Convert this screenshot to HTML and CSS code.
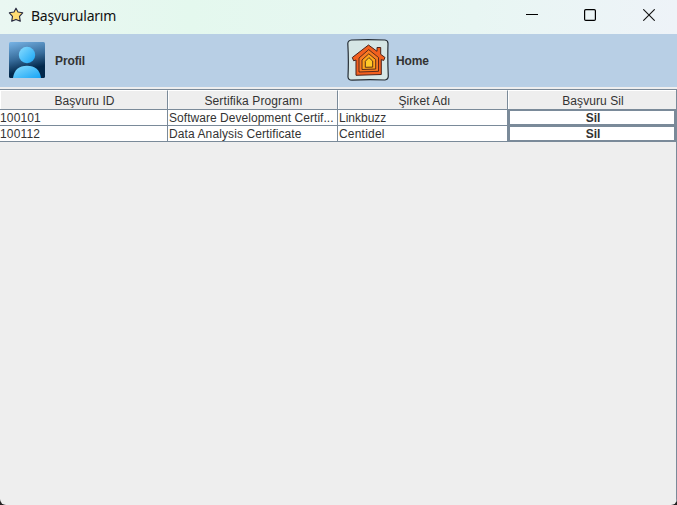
FILE: index.html
```html
<!DOCTYPE html>
<html lang="tr">
<head>
<meta charset="utf-8">
<title>Başvurularım</title>
<link rel="stylesheet" href="styles.css">
</head>
<body>
<div class="window">
  <header class="titlebar">
    <svg class="star" width="16" height="16" viewBox="0 0 16 16"><path d="M8 1.2 10 5l4.7.8-3.2 3.6.8 4.9L8 12.4l-4.3 1.9.8-4.9L1.3 5.8 6 5Z" fill="#ffdc73" stroke="#272a40" stroke-width="1.1" stroke-linejoin="round"/></svg>
    <h1 class="title">Başvurularım</h1>
    <div class="controls">
      <svg width="12" height="12" viewBox="0 0 12 12"><path d="M0 5.500h12" stroke="#000"/></svg>
      <svg width="12" height="12" viewBox="0 0 12 12"><rect x=".6" y=".6" width="10.8" height="10.8" rx="1.2" fill="none" stroke="#000" stroke-width="1.2"/></svg>
      <svg width="12" height="12" viewBox="0 0 12 12"><path d="M.3.3l11.4 11.4M11.7.3.3 11.7" stroke="#111" stroke-width="1.1"/></svg>
    </div>
  </header>
  <nav class="menubar">
    <div class="menu profile">
      <svg width="36" height="36" viewBox="0 0 36 36">
        <defs>
          <linearGradient id="bg" x1="0" y1="0" x2=".25" y2="1"><stop offset="0" stop-color="#78b4e6"/><stop offset=".5" stop-color="#376c9b"/><stop offset=".85" stop-color="#02284b"/></linearGradient>
          <linearGradient id="person" x1="0" y1="0" x2="1" y2="1"><stop offset="0" stop-color="#8addff"/><stop offset="1" stop-color="#16a4f5"/></linearGradient>
          <clipPath id="frame"><rect width="36" height="36" rx="1.500"/></clipPath>
        </defs>
        <g clip-path="url(#frame)"><rect width="36" height="36" fill="url(#bg)"/><circle cx="18" cy="13" r="8.2" fill="url(#person)"/><path d="M4 36c1-8 6-12.200 14-12.200S31 28 32 36Z" fill="url(#person)"/></g>
      </svg>
      <span>Profil</span>
    </div>
    <div class="menu home">
      <svg width="42" height="42" viewBox="0 0 42 42">
        <path d="M4.500 1Q21 .2 38 1q3 .3 3 3.500Q40.500 21 41.300 37q0 3.500-3.300 4-17-.8-33 .2Q1.200 41 1 38 1.800 21 .8 4.500 1 1.500 4.500 1Z" fill="#d6e6e5" stroke="#262e35" stroke-width="1.200"/>
        <path d="M5.300 18.500 21.500 6l8.500 6.300V8.500h3.700v6.800l4.300 3.200-1.400 3-2.300-1V35.500L9 36.300V21l-2.400.8Z" fill="#f2601f" stroke="#4b2219" stroke-width="1" stroke-linejoin="round"/>
        <path d="M12 33V19L21.700 10.600 31.500 18.500V32.300Z" fill="#f97c22" stroke="#4b2219" stroke-width=".9" stroke-linejoin="round"/>
        <path d="M15 30.500V21L21.800 14.800 28.700 20.500v9.500Z" fill="#ffa51b" stroke="#4b2219" stroke-width=".9" stroke-linejoin="round"/>
        <path d="M18.300 28.300v-6l3.600-3.700 3.800 3.500v6Z" fill="#ffc928" stroke="#4b2219" stroke-width=".9" stroke-linejoin="round"/>
      </svg>
      <span>Home</span>
    </div>
  </nav>
  <main class="content">
    <table class="applications">
      <colgroup><col class="c-id"><col class="c-mid"><col class="c-mid"><col class="c-delete"></colgroup>
      <thead><tr><th>Başvuru ID</th><th class="h-program">Sertifika Programı</th><th class="h-company">Şirket Adı</th><th>Başvuru Sil</th></tr></thead>
      <tbody>
        <tr><td class="id">100101</td><td class="software">Software Development Certif...</td><td>Linkbuzz</td><td class="action"><button>Sil</button></td></tr>
        <tr><td class="id">100112</td><td class="data">Data Analysis Certificate</td><td class="centidel">Centidel</td><td class="action"><button>Sil</button></td></tr>
      </tbody>
    </table>
  </main>
</div>
</body>
</html>
```
FILE: styles.css
```css
* { box-sizing: border-box; }
body { margin: 0; background: #222; overflow: hidden; font: 12px "Liberation Sans", Arial, sans-serif; color: #333; }
.window { width: 677px; height: 505px; display: flex; flex-direction: column; background: #eee; border-radius: 0 0 6px 6px; overflow: hidden; }
.titlebar { height: 34px; flex: none; display: flex; align-items: center; padding: 0 22px 4px 8px; background: linear-gradient(90deg, #eaf7f2 0%, #e4f8ee 28%, #e8f6f3 70%, #eef3f8 100%); }
.star { margin-right: 7px; }
.title { margin: 0; color: #111; font: 14px/20px "Noto Sans", sans-serif; letter-spacing: -.23px; padding-top: 2px; }
.controls { display: flex; gap: 46px; margin-left: auto; }
.controls svg:nth-child(-n+2) { margin-left: -1px; margin-right: 1px; }
.menubar { height: 53px; flex: none; display: grid; grid-template-columns: 338px 1fr; background: #b8cfe5; font-weight: bold; }
.menu { display: flex; align-items: center; }
.menu svg { margin-bottom: 1px; }
.profile { padding-left: 9px; gap: 10px; letter-spacing: -.1px; }
.home { padding-left: 9px; gap: 7px; letter-spacing: -.1px; }
.content { flex: 1; margin-top: 2px; border-top: 1px solid #7a8a99; border-right: 1px solid #7a8a99; }
.applications { width: 676px; border-collapse: separate; border-spacing: 0; table-layout: fixed; }
.c-id { width: 168px; }
.c-mid { width: 170px; }
.c-delete { width: 168px; }
th, td { padding: 0; white-space: nowrap; border-right: 1px solid #7a8a99; border-bottom: 1px solid #7a8a99; }
th { height: 20px; padding: 2px 0 0 2px; line-height: 16px; font-weight: normal; letter-spacing: .07px; border-top: 1px solid #fff; box-shadow: inset 1px 0 #fff; }
.h-program { letter-spacing: .12px; }
.h-company { padding-left: 4px; }
td { height: 16px; line-height: 14px; padding: 1px 0 0 1px; background: #fff; }
td.id { padding-left: 0; letter-spacing: .15px; }
.software { letter-spacing: .04px; }
.data { letter-spacing: .1px; }
.centidel { letter-spacing: .2px; }
td.action { padding: 0; border: 0; }
button { display: block; width: 100%; height: 16px; padding: 2px 0 0 2px; border: 2px solid #7a8a99; border-top-width: 1px; background: #fff; color: #333; font: bold 12px/11px "Liberation Sans", Arial, sans-serif; }
th:last-child { border-right: 0; }
```
